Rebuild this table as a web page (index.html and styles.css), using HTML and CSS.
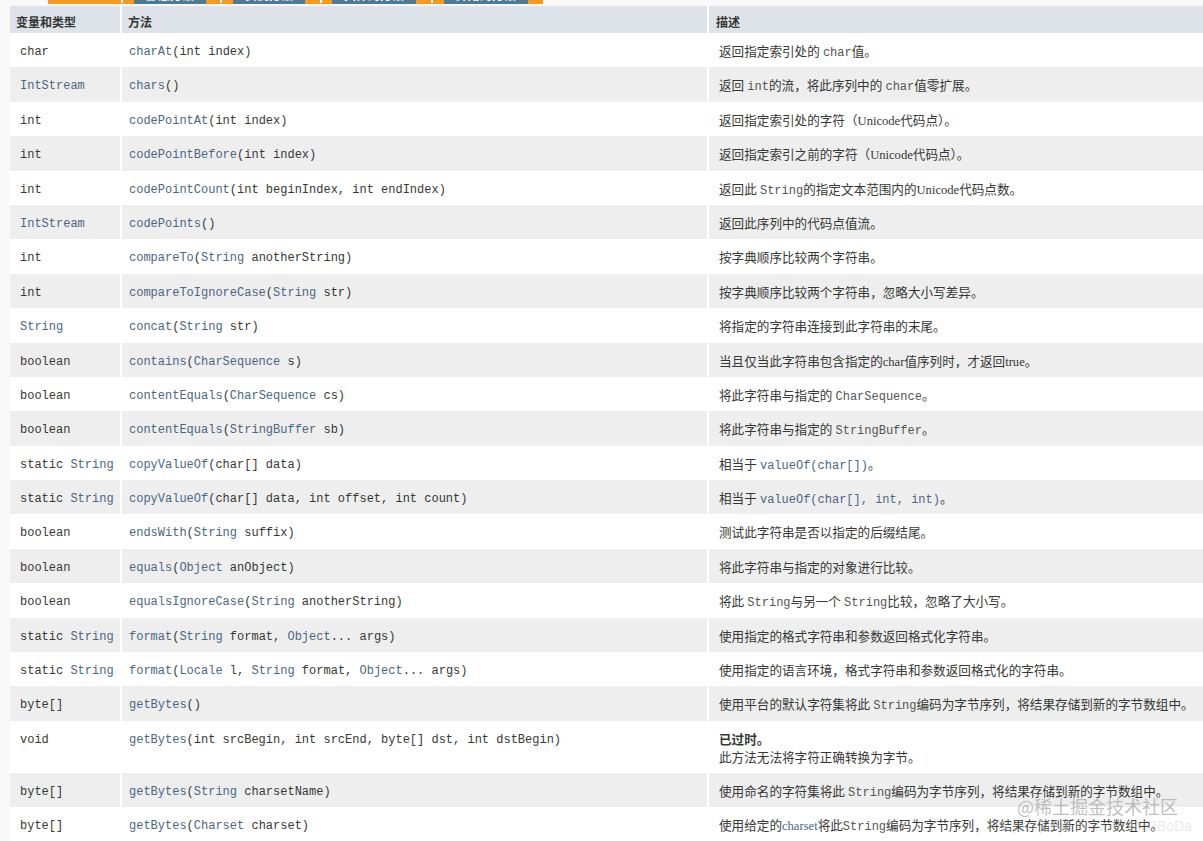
FILE: index.html
```html
<!DOCTYPE html>
<html lang="zh-CN">
<head>
    <meta charset="UTF-8">
    <title>String 方法摘要</title>
    <link rel="stylesheet" href="styles.css">
</head>
<body>
    <div class="summary">
        <!-- Method tabs (only the lower edge is in view) -->
        <div class="tabs">
            <span class="tab active">所有方法</span>
            <span class="dot d1"></span>
            <span class="tab t1">静态方法</span>
            <span class="dot d2"></span>
            <span class="tab t2">实例方法</span>
            <span class="dot d3"></span>
            <span class="tab t3">具体的方法</span>
            <span class="dot d4"></span>
            <span class="tab t4">弃用的方法</span>
        </div>

        <table class="members">
            <thead>
                <tr>
                    <th class="col-type">变量和类型</th>
                    <th class="col-method">方法</th>
                    <th class="col-desc">描述</th>
                </tr>
            </thead>
            <tbody>
                <tr>
                    <td class="type">char</td>
                    <td class="method"><a>charAt</a>(int&nbsp;index)</td>
                    <td class="desc">返回指定索引处的 <code>char</code>值。</td>
                </tr>
                <tr>
                    <td class="type"><a>IntStream</a></td>
                    <td class="method"><a>chars</a>()</td>
                    <td class="desc">返回 <code>int</code>的流，将此序列中的 <code>char</code>值零扩展。</td>
                </tr>
                <tr>
                    <td class="type">int</td>
                    <td class="method"><a>codePointAt</a>(int&nbsp;index)</td>
                    <td class="desc">返回指定索引处的字符（Unicode代码点）。</td>
                </tr>
                <tr>
                    <td class="type">int</td>
                    <td class="method"><a>codePointBefore</a>(int&nbsp;index)</td>
                    <td class="desc">返回指定索引之前的字符（Unicode代码点）。</td>
                </tr>
                <tr>
                    <td class="type">int</td>
                    <td class="method"><a>codePointCount</a>(int&nbsp;beginIndex, int&nbsp;endIndex)</td>
                    <td class="desc">返回此 <code>String</code>的指定文本范围内的Unicode代码点数。</td>
                </tr>
                <tr>
                    <td class="type"><a>IntStream</a></td>
                    <td class="method"><a>codePoints</a>()</td>
                    <td class="desc">返回此序列中的代码点值流。</td>
                </tr>
                <tr>
                    <td class="type">int</td>
                    <td class="method"><a>compareTo</a>(<a>String</a>&nbsp;anotherString)</td>
                    <td class="desc">按字典顺序比较两个字符串。</td>
                </tr>
                <tr>
                    <td class="type">int</td>
                    <td class="method"><a>compareToIgnoreCase</a>(<a>String</a>&nbsp;str)</td>
                    <td class="desc">按字典顺序比较两个字符串，忽略大小写差异。</td>
                </tr>
                <tr>
                    <td class="type"><a>String</a></td>
                    <td class="method"><a>concat</a>(<a>String</a>&nbsp;str)</td>
                    <td class="desc">将指定的字符串连接到此字符串的末尾。</td>
                </tr>
                <tr>
                    <td class="type">boolean</td>
                    <td class="method"><a>contains</a>(<a>CharSequence</a>&nbsp;s)</td>
                    <td class="desc">当且仅当此字符串包含指定的char值序列时，才返回true。</td>
                </tr>
                <tr>
                    <td class="type">boolean</td>
                    <td class="method"><a>contentEquals</a>(<a>CharSequence</a>&nbsp;cs)</td>
                    <td class="desc">将此字符串与指定的 <code>CharSequence</code>。</td>
                </tr>
                <tr>
                    <td class="type">boolean</td>
                    <td class="method"><a>contentEquals</a>(<a>StringBuffer</a>&nbsp;sb)</td>
                    <td class="desc">将此字符串与指定的 <code>StringBuffer</code>。</td>
                </tr>
                <tr>
                    <td class="type">static <a>String</a></td>
                    <td class="method"><a>copyValueOf</a>(char[]&nbsp;data)</td>
                    <td class="desc">相当于 <code class="link">valueOf(char[])</code>。</td>
                </tr>
                <tr>
                    <td class="type">static <a>String</a></td>
                    <td class="method"><a>copyValueOf</a>(char[]&nbsp;data, int&nbsp;offset, int&nbsp;count)</td>
                    <td class="desc">相当于 <code class="link">valueOf(char[], int, int)</code>。</td>
                </tr>
                <tr>
                    <td class="type">boolean</td>
                    <td class="method"><a>endsWith</a>(<a>String</a>&nbsp;suffix)</td>
                    <td class="desc">测试此字符串是否以指定的后缀结尾。</td>
                </tr>
                <tr>
                    <td class="type">boolean</td>
                    <td class="method"><a>equals</a>(<a>Object</a>&nbsp;anObject)</td>
                    <td class="desc">将此字符串与指定的对象进行比较。</td>
                </tr>
                <tr>
                    <td class="type">boolean</td>
                    <td class="method"><a>equalsIgnoreCase</a>(<a>String</a>&nbsp;anotherString)</td>
                    <td class="desc">将此 <code>String</code>与另一个 <code>String</code>比较，忽略了大小写。</td>
                </tr>
                <tr>
                    <td class="type">static <a>String</a></td>
                    <td class="method"><a>format</a>(<a>String</a>&nbsp;format, <a>Object</a>...&nbsp;args)</td>
                    <td class="desc">使用指定的格式字符串和参数返回格式化字符串。</td>
                </tr>
                <tr>
                    <td class="type">static <a>String</a></td>
                    <td class="method"><a>format</a>(<a>Locale</a>&nbsp;l, <a>String</a>&nbsp;format, <a>Object</a>...&nbsp;args)</td>
                    <td class="desc">使用指定的语言环境，格式字符串和参数返回格式化的字符串。</td>
                </tr>
                <tr>
                    <td class="type">byte[]</td>
                    <td class="method"><a>getBytes</a>()</td>
                    <td class="desc">使用平台的默认字符集将此 <code>String</code>编码为字节序列，将结果存储到新的字节数组中。</td>
                </tr>
                <tr class="tall">
                    <td class="type">void</td>
                    <td class="method"><a>getBytes</a>(int&nbsp;srcBegin, int&nbsp;srcEnd, byte[]&nbsp;dst, int&nbsp;dstBegin)</td>
                    <td class="desc"><strong>已过时。</strong><br>此方法无法将字符正确转换为字节。</td>
                </tr>
                <tr>
                    <td class="type">byte[]</td>
                    <td class="method"><a>getBytes</a>(<a>String</a>&nbsp;charsetName)</td>
                    <td class="desc">使用命名的字符集将此 <code>String</code>编码为字节序列，将结果存储到新的字节数组中。</td>
                </tr>
                <tr>
                    <td class="type">byte[]</td>
                    <td class="method"><a>getBytes</a>(<a>Charset</a>&nbsp;charset)</td>
                    <td class="desc">使用给定的<a>charset</a>将此<code>String</code>编码为字节序列，将结果存储到新的字节数组中。</td>
                </tr>
            </tbody>
        </table>
    </div>

    <!-- Site watermark -->
    <div class="watermark">
        <div class="wm-name">@稀土掘金技术社区</div>
        <div class="wm-url">https://juejin.cn/user/2453BoDa</div>
    </div>
</body>
</html>
```

FILE: styles.css
```css
body {
    margin: 0;
    padding: 0;
    background-color: #f8f8f8;
    color: #353833;
    font-family: "Liberation Sans", "Noto Sans CJK SC", sans-serif;
}
.summary {
    padding-left: 10px;
}
.tabs {
    display: flex;
    align-items: flex-end;
    width: 495px;
    height: 4px;
    margin-left: 38px;
    margin-bottom: 2px;
    overflow: hidden;
    background-color: #f8981d;
}
.tab {
    flex: none;
    height: 16px;
    padding: 0 12px;
    line-height: 16px;
    font-size: 12px;
    font-weight: bold;
    color: #fff;
    background-color: #4d7a97;
}
.tab.active {
    height: 24px;
    line-height: 16px;
    background-color: #f8981d;
}
.dot {
    flex: none;
    align-self: flex-start;
    width: 2px;
    height: 3px;
    background-color: #fff;
}
.d1 { margin-left: 1px; }
.t1 { margin-left: 11px; }
.d2 { margin-left: 14px; }
.t2 { margin-left: 11px; }
.d3 { margin-left: 15px; }
.t3 { margin-left: 10px; }
.d4 { margin-left: 15px; }
.t4 { margin-left: 11px; }
.members {
    width: 1193px;
    table-layout: fixed;
    border-collapse: separate;
    border-spacing: 0;
}
.members th {
    padding: 8px 3px 1px 6px;
    line-height: 18px;
    font-size: 12px;
    font-weight: bold;
    text-align: left;
    vertical-align: top;
    background-color: #dee3e9;
}
.members th.col-type {
    width: 101px;
}
.members th.col-method {
    width: 576px;
}
.members th.col-desc {
    padding-left: 7px;
}
.members th + th,
.members td + td {
    border-left: 2px solid #fff;
}
.members tbody tr {
    height: 34.4px;
}
.members td {
    padding: 10px 3px 0 10px;
    line-height: 18px;
    vertical-align: top;
    white-space: nowrap;
    overflow: visible;
}
.members tr.tall td {
    padding-bottom: 6px;
}
.members tbody tr:nth-child(odd) {
    background-color: #fff;
}
.members tbody tr:nth-child(even) {
    background-color: #eeeeef;
}
.type, .method {
    font-family: "Liberation Mono", monospace;
    font-size: 12px;
}
.members td.method {
    padding-left: 7px;
}
a {
    color: #4a6782;
    text-decoration: none;
}
.desc {
    font-family: "Liberation Serif", "Noto Sans CJK SC", serif;
    font-size: 12.6px;
    color: #353833;
}
.desc code {
    font-family: "Liberation Mono", monospace;
    font-size: 12px;
    line-height: 18px;
    color: #555;
}
.desc code.link {
    color: #4a6782;
}
.desc strong {
    font-weight: bold;
}
.watermark {
    position: absolute;
    right: 11px;
    top: 794px;
    text-align: right;
    font-family: "Noto Sans CJK SC", sans-serif;
    pointer-events: none;
}
.wm-name {
    margin-right: 14px;
    font-size: 18px;
    line-height: 24px;
    color: rgba(170, 170, 170, 0.75);
}
.wm-url {
    font-family: "Liberation Sans", sans-serif;
    font-size: 14px;
    line-height: 16px;
    color: rgba(190, 190, 190, 0.35);
}
```
